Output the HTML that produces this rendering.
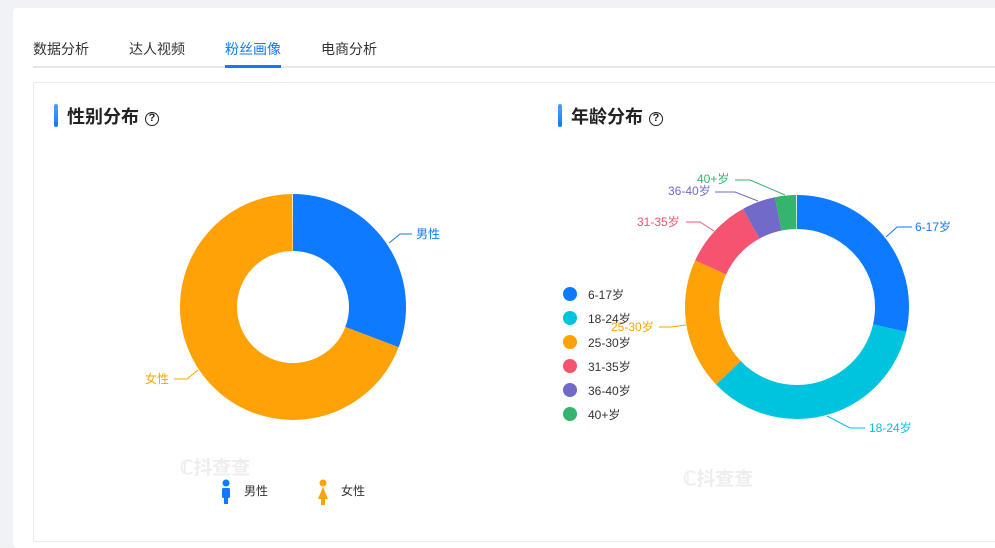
<!DOCTYPE html>
<html><head><meta charset="utf-8"><style>
*{margin:0;padding:0;box-sizing:border-box}
body{width:995px;height:532px;background:#f0f2f5;font-family:"Liberation Sans","Noto Sans CJK SC",sans-serif;position:relative;overflow:hidden}
.card{position:absolute;left:13px;top:8px;width:1000px;height:540px;background:#fff;border-radius:4px}
.tab{position:absolute;top:39px;font-size:14px;color:#333}
.tabline{position:absolute;left:33px;top:66px;width:970px;height:2px;background:#e4e8ee}
.act{position:absolute;left:225px;top:65px;width:56px;height:3px;background:#1677ff}
.panel{position:absolute;left:33px;top:82px;width:970px;height:460px;border:1px solid #e8ebf0;border-radius:2px}
.t{position:absolute;top:103px;font-size:18px;font-weight:bold;color:#222}
.bar{position:absolute;top:104px;width:4px;height:23px;border-radius:2px;background:linear-gradient(#4aa3ff,#1677ff)}
.q{display:inline-block;width:14px;height:14px;border:1.6px solid #222;border-radius:50%;font-size:11px;line-height:11px;text-align:center;vertical-align:2px;margin-left:6px}
.lg{position:absolute;left:563px;font-size:12px;color:#333}
.lg i{display:inline-block;width:14px;height:14px;border-radius:50%;vertical-align:-2px;margin-right:11px}
</style></head><body>
<div class="card"></div>
<div class="tab" style="left:33px">数据分析</div>
<div class="tab" style="left:129px">达人视频</div>
<div class="tab" style="left:225px;color:#1677ff">粉丝画像</div>
<div class="tab" style="left:321px">电商分析</div>
<div class="tabline"></div><div class="act"></div>
<div class="panel"></div>
<div class="bar" style="left:54px"></div><div class="t" style="left:67px">性别分布<span class="q">?</span></div>
<div class="bar" style="left:558px"></div><div class="t" style="left:571px">年龄分布<span class="q">?</span></div>
<svg width="995" height="532" style="position:absolute;left:0;top:0" font-family="Liberation Sans, Noto Sans CJK SC, sans-serif" font-size="12">
<g transform="translate(293,307) rotate(-90)" fill="none" stroke-width="57">
<circle r="84.5" pathLength="360" stroke="#0d7aff" stroke-dasharray="111 360"/>
<circle r="84.5" pathLength="360" stroke="#fea207" stroke-dasharray="249 360" stroke-dashoffset="-111"/>
</g>
<polyline points="389,243 400,234 412,234" fill="none" stroke="#0d7aff"/><text x="416" y="238" fill="#0d7aff">男性</text>
<polyline points="198,370 187,379 174,379" fill="none" stroke="#fea207"/><text x="145" y="383" fill="#fea207">女性</text>
<g transform="translate(797,307) rotate(-90)" fill="none" stroke-width="34">
<circle r="95" pathLength="360" stroke="#0d7aff" stroke-dasharray="103 360"/>
<circle r="95" pathLength="360" stroke="#00c4dd" stroke-dasharray="123.5 360" stroke-dashoffset="-103"/>
<circle r="95" pathLength="360" stroke="#fea207" stroke-dasharray="68.5 360" stroke-dashoffset="-226.5"/>
<circle r="95" pathLength="360" stroke="#f5536f" stroke-dasharray="36.6 360" stroke-dashoffset="-295"/>
<circle r="95" pathLength="360" stroke="#716ac9" stroke-dasharray="17.4 360" stroke-dashoffset="-331.6"/>
<circle r="95" pathLength="360" stroke="#35b46e" stroke-dasharray="11 360" stroke-dashoffset="-349"/>
</g>
<g fill="none">
<polyline points="886,237 897,227 912,227" stroke="#0d7aff"/>
<polyline points="827,416 850,428 865,428" stroke="#00c4dd"/>
<polyline points="686,325 671,327 659,327" stroke="#fea207"/>
<polyline points="714,231 700,222 686,222" stroke="#f5536f"/>
<polyline points="758,201 735,192 715,192" stroke="#716ac9"/>
<polyline points="785,195 750,180 735,180" stroke="#35b46e"/>
</g>
<text x="915" y="231" fill="#0d7aff">6-17岁</text>
<text x="869" y="432" fill="#00c4dd">18-24岁</text>
<text x="611" y="331" fill="#fea207">25-30岁</text>
<text x="637" y="226" fill="#f5536f">31-35岁</text>
<text x="668" y="195" fill="#716ac9">36-40岁</text>
<text x="697" y="183" fill="#35b46e">40+岁</text>
<g fill="#0d7aff"><circle cx="226" cy="483" r="3.5"/><rect x="222" y="488" width="8" height="10" rx="1.5"/><rect x="224" y="496" width="4" height="8"/></g>
<g fill="#fea207"><circle cx="323" cy="483" r="3.5"/><path d="M323 487 L318 499 L321 499 L321 505 L325 505 L325 499 L328 499 Z"/></g>
<text x="244" y="495" fill="#333">男性</text><text x="341" y="495" fill="#333">女性</text>
<text x="180" y="474" fill="#eee" font-size="19" font-weight="bold">ℂ抖查查</text>
<text x="683" y="485" fill="#eee" font-size="19" font-weight="bold">ℂ抖查查</text>
</svg>
<div class="lg" style="top:286px"><i style="background:#0d7aff"></i>6-17岁</div>
<div class="lg" style="top:310px"><i style="background:#00c4dd"></i>18-24岁</div>
<div class="lg" style="top:334px"><i style="background:#fea207"></i>25-30岁</div>
<div class="lg" style="top:358px"><i style="background:#f5536f"></i>31-35岁</div>
<div class="lg" style="top:382px"><i style="background:#716ac9"></i>36-40岁</div>
<div class="lg" style="top:406px"><i style="background:#35b46e"></i>40+岁</div>
</body></html>
